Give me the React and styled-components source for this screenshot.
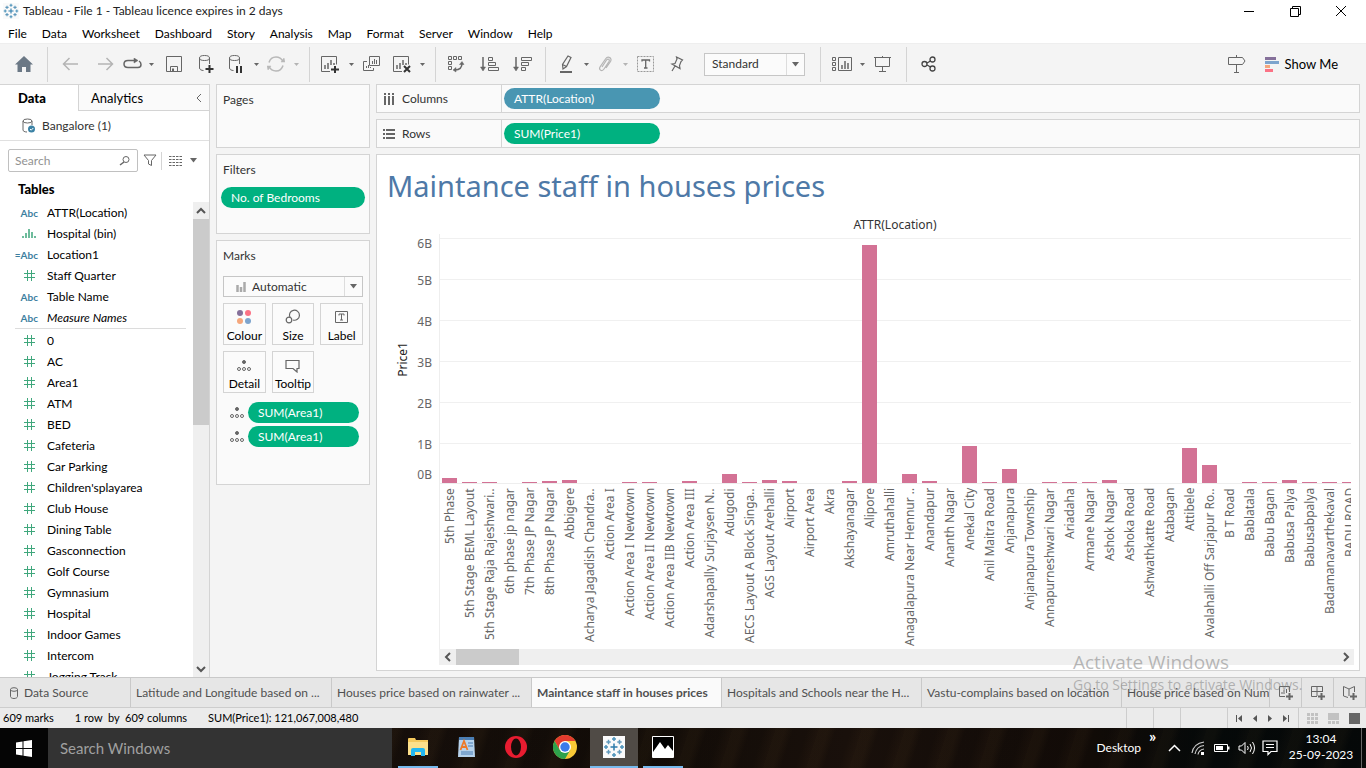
import React from 'react';
import styled, { createGlobalStyle, css } from 'styled-components';

const UI = '"Lato", "Open Sans", sans-serif';
const CHART = '"Noto Sans", "Open Sans", sans-serif';
const LINE = '#d4d4d4';
const GREEN = '#00b180';
const BLUE = '#4996b2';

const Global = createGlobalStyle`
  * { box-sizing: border-box; }
  html, body { margin: 0; padding: 0; }
  body { font-family: ${UI}; font-size: 12px; line-height: 16px; color: #000; background: #f4f4f4; overflow: hidden; }
  button, input, select { font: inherit; color: inherit; margin: 0; }
  button { border: 0; background: none; padding: 0; text-align: left; }
  ul { list-style: none; margin: 0; padding: 0; }
  svg { display: block; flex: none; }
`;

const Window = styled.div`
  display: flex;
  flex-direction: column;
  height: 100vh;
  position: relative;
`;

/* ---------- title bar and menu ---------- */

const TitleBar = styled.header`
  display: flex;
  align-items: center;
  height: 23px;
  padding: 0 2px 1px 3px;
  background: #fff;
`;
const TitleText = styled.h1`
  flex: 1;
  margin: 0 0 0 4px;
  font-size: 12px;
  font-weight: 400;
  color: #222;
`;
const WindowButton = styled.button`
  display: flex;
  align-items: center;
  justify-content: center;
  width: 46px;
  height: 22px;
`;
const MenuBar = styled.nav`
  display: flex;
  align-items: flex-end;
  gap: 15px;
  height: 20px;
  padding: 0 8px 1px;
  background: #fff;
`;
const MenuItem = styled.button`
  flex: none;
`;

/* ---------- toolbar ---------- */

const ToolBar = styled.div`
  display: flex;
  align-items: center;
  height: 41px;
  background: #f4f4f4;
  border-top: 1px solid #eee;
`;
const ToolGroup = styled.div`
  display: flex;
  align-items: center;
  width: ${(p) => p.$w}px;
  height: 35px;
  padding-left: 4px;
  border-right: ${(p) => (p.$last ? 0 : 1)}px solid ${LINE};
`;
const Tool = styled.button`
  display: flex;
  align-items: center;
  justify-content: center;
  flex: none;
  width: ${(p) => p.$w}px;
  height: 28px;
`;
const Spacer = styled.div`
  flex: 1;
`;
const ShowMe = styled.button`
  display: flex;
  align-items: center;
  gap: 6px;
  margin: 0 28px 0 18px;
  font-size: 13px;
`;
const SelectBox = styled.div`
  display: grid;
  grid-template-columns: 1fr 18px;
  align-items: center;
  width: ${(p) => p.$w};
  height: ${(p) => p.$h}px;
  margin: ${(p) => p.$m};
  background: #fbfbfb;
  border: 1px solid #c6c6c6;
  color: #333;
  & > * { grid-row: 1; }
  select {
    grid-column: 1 / 3;
    width: 100%;
    height: 100%;
    padding: 0 0 0 ${(p) => p.$pad}px;
    border: 0;
    background: none;
    appearance: none;
  }
`;
const SelectArrow = styled.span`
  grid-column: 2;
  display: flex;
  align-items: center;
  justify-content: center;
  height: 100%;
  border-left: 1px solid #ddd;
  pointer-events: none;
`;
const SelectIcon = styled.span`
  grid-column: 1;
  padding-left: 12px;
  pointer-events: none;
`;

/* ---------- body ---------- */

const Body = styled.main`
  display: flex;
  flex: 1;
  min-height: 0;
`;
const Side = styled.aside`
  display: flex;
  flex-direction: column;
  width: 210px;
  background: #fff;
  border-right: 1px solid ${LINE};
  border-top: 1px solid ${LINE};
`;
const SideTabs = styled.div`
  display: flex;
  height: 26px;
`;
const SideTab = styled.button`
  display: flex;
  align-items: center;
  justify-content: space-between;
  font-size: 13px;
  ${(p) => p.$active
    ? css`width: 78px; padding-left: 18px; font-weight: 900;`
    : css`flex: 1; padding: 0 6px 0 12px; background: #fafafa; border-left: 1px solid ${LINE}; border-bottom: 1px solid ${LINE};`}
`;
const Source = styled.div`
  display: flex;
  align-items: center;
  gap: 6px;
  height: 30px;
  padding-left: 22px;
  color: #333;
  border-bottom: 1px solid #e0e0e0;
`;
const SearchRow = styled.div`
  display: flex;
  align-items: center;
  padding: 8px 8px 0;
`;
const SearchBox = styled.label`
  display: flex;
  align-items: center;
  width: 130px;
  height: 23px;
  padding: 0 6px;
  border: 1px solid #c0c0c0;
  border-radius: 2px;
  input { flex: 1; min-width: 0; border: 0; padding: 0; outline: 0; background: none; }
  input::placeholder { color: #929292; opacity: 1; }
`;
const IconButton = styled.button`
  display: flex;
  align-items: center;
  justify-content: center;
  width: ${(p) => p.$w}px;
  height: 18px;
  border-left: ${(p) => (p.$ruled ? `1px solid ${LINE}` : 0)};
`;
const Heading = styled.h2`
  margin: 8px 0 4px 18px;
  font-size: 13px;
  line-height: 18px;
  font-weight: 900;
`;
const ListArea = styled.div`
  display: flex;
  flex: 1;
  min-height: 0;
`;
const Fields = styled.ul`
  flex: 1;
  overflow: hidden;
`;
const Field = styled.li`
  display: flex;
  align-items: center;
  height: 21px;
  font-style: ${(p) => (p.$italic ? 'italic' : 'normal')};
`;
const FieldRule = styled.li`
  height: 2px;
  margin-left: 15px;
  margin-right: 7px;
  border-top: 1px solid #dcdcdc;
`;
const FieldType = styled.span`
  display: flex;
  align-items: center;
  justify-content: ${(p) => (p.$text ? 'flex-end' : 'center')};
  width: ${(p) => (p.$text ? 38 : 58)}px;
  margin-right: ${(p) => (p.$text ? 9 : -11)}px;
  font-size: 10px;
  font-style: normal;
  font-weight: 700;
  color: #3d7f9f;
`;
const Scroll = styled.div`
  display: flex;
  flex-direction: ${(p) => (p.$h ? 'row' : 'column')};
  justify-content: space-between;
  align-items: center;
  flex: none;
  width: ${(p) => (p.$h ? 'auto' : '16px')};
  height: ${(p) => (p.$h ? '16px' : 'auto')};
  background: #efefef;
`;
const ScrollArrow = styled.button`
  display: flex;
  align-items: center;
  justify-content: center;
  width: 17px;
  height: 17px;
`;
const ScrollThumb = styled.div`
  ${(p) => (p.$h ? 'width: 63px; height: 16px;' : 'width: 16px; height: 206px;')}
  background: #cbcbcb;
`;

const Shelves = styled.section`
  display: flex;
  flex-direction: column;
  gap: 6px;
  width: 154px;
  margin-left: 6px;
`;
const Card = styled.div`
  display: flex;
  flex-direction: column;
  height: ${(p) => p.$h}px;
  padding: 7px 6px 0;
  background: #fafafa;
  border: 1px solid ${LINE};
  color: #333;
`;
const CardTitle = styled.h3`
  margin: 0;
  font-size: 12px;
  font-weight: 400;
`;
const Pill = styled.button`
  height: 21px;
  padding: 0 10px;
  border-radius: 11px;
  color: #fff;
  background: ${(p) => p.$color || GREEN};
  width: ${(p) => p.$w}px;
  margin: ${(p) => p.$m || 0};
`;
const MarkGrid = styled.div`
  display: grid;
  grid-template-columns: repeat(3, 1fr);
  gap: 6px;
  margin-bottom: 9px;
`;
const MarkButton = styled.button`
  display: flex;
  flex-direction: column;
  align-items: center;
  justify-content: space-between;
  height: 42px;
  padding: 5px 0 0;
  background: #fbfbfb;
  border: 1px solid ${LINE};
  color: #000;
`;
const PillRow = styled.div`
  display: flex;
  align-items: center;
  gap: 4px;
  padding-left: 7px;
  margin-bottom: 3px;
`;

const Sheet = styled.section`
  display: flex;
  flex: 1;
  flex-direction: column;
  gap: 6px;
  min-width: 0;
  margin: 0 6px 6px;
`;
const Shelf = styled.div`
  display: flex;
  height: 29px;
  background: #fafafa;
  border: 1px solid ${LINE};
`;
const ShelfLabel = styled.div`
  display: flex;
  align-items: center;
  gap: 7px;
  width: 125px;
  padding-left: 6px;
  color: #333;
  border-right: 1px solid ${LINE};
`;
const View = styled.div`
  display: flex;
  flex: 1;
  flex-direction: column;
  min-height: 0;
  padding: 0 5px 5px 0;
  background: #fff;
  border: 1px solid ${LINE};
  font-family: ${CHART};
`;
const ViewTitle = styled.h2`
  margin: 13px 0 11px 10px;
  font-size: 29px;
  line-height: 36px;
  font-weight: 400;
  color: #4e79a7;
`;
const FieldTitle = styled.div`
  margin: 0 3px 0 62px;
  height: 19px;
  line-height: 20px;
  text-align: center;
  color: #333;
`;
const Chart = styled.div`
  display: grid;
  flex: 1;
  min-height: 0;
  grid-template-columns: 34px 28px minmax(0, 1fr);
  grid-template-rows: 250px minmax(0, 1fr);
  margin-right: 3px;
`;
const AxisTitle = styled.div`
  justify-self: end;
  align-self: center;
  writing-mode: vertical-rl;
  transform: rotate(180deg);
  color: #222;
`;
const AxisLabels = styled.ul`
  padding-right: 7px;
  text-align: right;
  color: #666;
  li { height: 41px; line-height: 41px; }
  li:first-child { height: 26px; line-height: 20px; }
  li:last-child { height: 19px; line-height: 20px; }
`;
const Plot = styled.div`
  display: grid;
  grid-column: 3;
  overflow: hidden;
  border-left: 1px solid #eee;
  & > * { grid-area: 1 / 1; }
`;
const GridLines = styled.div`
  padding-top: 4px;
  div { height: 41px; border-top: 1px solid #f0f0f0; }
`;
const Bars = styled.div`
  display: flex;
  align-items: flex-end;
  border-bottom: 1px solid #eee;
`;
const Bar = styled.div`
  flex: none;
  width: 15px;
  margin: 0 3px 0 2px;
  background: #d37295;
`;
const Ticks = styled.ul`
  display: flex;
  grid-column: 3;
  overflow: hidden;
  border-left: 1px solid #eee;
`;
const Tick = styled.li`
  flex: none;
  display: flex;
  justify-content: center;
  width: 20px;
  color: #666;
  span {
    height: 100%;
    padding-bottom: 4px;
    line-height: 18px;
    text-align: right;
    white-space: nowrap;
    writing-mode: vertical-rl;
    transform: rotate(180deg);
  }
`;
const ChartScroll = styled.div`
  margin-left: 62px;
`;

/* ---------- bottom strips ---------- */

const SheetTabs = styled.div`
  display: flex;
  height: 31px;
  background: #e6e6e6;
  border-top: 1px solid #c9c9c9;
  border-bottom: 1px solid #cdcdcd;
`;
const SheetTab = styled.button`
  display: flex;
  align-items: center;
  gap: 6px;
  flex: ${(p) => (p.$grow ? 1 : 'none')};
  width: ${(p) => p.$w}px;
  padding-left: ${(p) => p.$pad || 5}px;
  overflow: hidden;
  white-space: nowrap;
  color: #505050;
  border-right: 1px solid #c9c9c9;
  ${(p) => p.$active && css`background: #fafafa; font-weight: 700;`}
`;
const NewTab = styled(SheetTab)`
  width: 32px;
  padding: 0;
  justify-content: center;
`;
const StatusBar = styled.footer`
  display: flex;
  height: 20px;
  align-items: center;
  padding-left: 3px;
  font-size: 11px;
  background: #ebebeb;
`;
const StatusText = styled.span`
  margin-right: 21px;
  white-space: pre;
`;
const StatusCell = styled.div`
  display: flex;
  align-items: center;
  justify-content: ${(p) => (p.$end ? 'flex-end' : 'space-evenly')};
  gap: ${(p) => (p.$end ? 10 : 0)}px;
  padding-right: ${(p) => (p.$end ? 6 : 0)}px;
  align-self: stretch;
  width: ${(p) => p.$w}px;
  border-left: 1px solid #cdcdcd;
`;

const TaskBar = styled.footer`
  display: flex;
  height: 40px;
  color: #fff;
  background:
    repeating-linear-gradient(108deg, rgba(80, 60, 30, 0.1) 0 9px, rgba(0, 0, 0, 0.12) 17px 30px, rgba(70, 48, 26, 0.08) 41px),
    linear-gradient(90deg, #0a0806, #18100b 30%, #130d08 46%, #1c120c 62%, #130c08 80%, #060a0a 88%, #060909);
`;
const Start = styled.button`
  display: flex;
  align-items: center;
  justify-content: center;
  width: 48px;
  background: #050505;
`;
const TaskSearch = styled.input`
  width: 344px;
  padding: 0 12px;
  border: 0;
  outline: 0;
  background: #333;
  && { font-size: 15px; }
  &::placeholder { color: #a0a0a0; opacity: 1; }
`;
const TaskApps = styled.div`
  display: flex;
  gap: 1px;
  padding-left: 2px;
`;
const TaskApp = styled.button`
  display: grid;
  grid-template-rows: 38px 2px;
  place-items: center;
  width: 48px;
  background: ${(p) => (p.$active ? '#504b46' : 'none')};
  &::after {
    content: '';
    width: ${(p) => (p.$active ? 48 : 40)}px;
    height: 2px;
    background: ${(p) => (p.$open ? '#76b9ed' : 'none')};
  }
`;
const Tray = styled.div`
  display: flex;
  align-items: center;
  margin-left: auto;
`;
const TrayItem = styled.button`
  display: flex;
  align-items: center;
  justify-content: center;
  width: 24px;
  height: 40px;
`;
const More = styled.span`
  align-self: flex-start;
  width: 9px;
  margin: 0 4px 0 8px;
  font-size: 16px;
  font-weight: 700;
`;
const Clock = styled.div`
  width: 76px;
  margin: 0 2px 0 1px;
  padding-bottom: 3px;
  text-align: center;
`;
const ShowDesktop = styled.button`
  align-self: stretch;
  width: 5px;
  border-left: 1px solid #666;
`;
const Watermark = styled.div`
  position: absolute;
  right: 57px;
  bottom: 72px;
  width: 236px;
  color: rgba(120, 120, 120, 0.5);
  font-family: "Open Sans", sans-serif;
  font-size: 14px;
  line-height: 22px;
  white-space: nowrap;
  pointer-events: none;
  strong { display: block; font-size: 19px; line-height: 24px; font-weight: 400; }
`;

/* ---------- icons ---------- */

const Svg = ({ w = 18, h = 18, c = '#666', sw = 1, children }) => (
  <svg width={w} height={h} viewBox={`0 0 ${w} ${h}`} fill="none" stroke={c} strokeWidth={sw} aria-hidden="true">
    {children}
  </svg>
);
const Caret = ({ c = '#666', big }) => big
  ? <svg width="7" height="5" fill={c}><path d="M0 0h7L3.500 4.500z" /></svg>
  : <svg width="5" height="3" fill={c}><path d="M0 0h5L2.500 3z" /></svg>;
const Chevron = ({ d, c = '#555' }) => {
  const p = { up: 'M1 7l4-4 4 4', down: 'M1 3l4 4 4-4', left: 'M7 1L3 5l4 4', right: 'M3 1l4 4-4 4' }[d];
  return <Svg w={10} h={10} c={c} sw={2}><path d={p} /></Svg>;
};
const Star = ({ x, y, r, c }) => <path d={`M${x - r} ${y}h${2 * r}M${x} ${y - r}v${2 * r}`} stroke={c} />;
const Logo = ({ s = 16 }) => (
  <svg width={s} height={s} viewBox="0 0 22 22" fill="none" strokeWidth="1.5">
    <rect width="22" height="22" fill="#fafafa" />
    <Star x={11} y={11} r={3.5} c="#2d7bab" />
    <Star x={11} y={3} r={2} c="#4d93ba" /><Star x={11} y={19} r={2} c="#4d93ba" />
    <Star x={3} y={11} r={2} c="#4d93ba" /><Star x={19} y={11} r={2} c="#4d93ba" />
    <Star x={5.5} y={6} r={2.2} c="#5f98bb" /><Star x={16.5} y={6} r={2.2} c="#5f98bb" />
    <Star x={5.5} y={16} r={2.2} c="#5f98bb" /><Star x={16.5} y={16} r={2.2} c="#5f98bb" />
  </svg>
);
const Cylinder = ({ plus, pause }) => (
  <Svg w={16} h={20}>
    <ellipse cx="6.500" cy="4" rx="5" ry="2.500" />
    <path d="M1.500 4v10c0 1.500 2 2.500 4 2.500M11.500 4v6" />
    {plus && <path d="M11.500 11v8M7.500 15h8" stroke="#333" strokeWidth="2" />}
    {pause && <path d="M9 12v7M13 12v7" stroke="#333" strokeWidth="2" />}
  </Svg>
);
const SheetIcon = ({ plus, cross }) => (
  <Svg w={20} h={18}>
    <path d="M10 16.500H1.500v-15h15v8" />
    <path d="M5 10v4M8 8v6M11 5v5M14 8v2" strokeWidth="1.500" />
    {plus && <path d="M15 11v7M11 14.500h8" stroke="#333" strokeWidth="2" />}
    {cross && <path d="M12 11l6 6M18 11l-6 6" stroke="#333" strokeWidth="2" />}
  </Svg>
);
const Dots = () => (
  <Svg w={14} h={12}>
    <circle cx="7" cy="2" r="1.500" fill="#666" />
    <circle cx="2" cy="9" r="1.500" /><circle cx="7" cy="9" r="1.500" /><circle cx="12" cy="9" r="1.500" />
  </Svg>
);
const Hash = () => (
  <Svg w={11} h={11} c="#3fa77c"><path d="M3.500 0v11M7.500 0v11M0 3.500h11M0 7.500h11" /></Svg>
);
const BinIcon = () => (
  <Svg w={14} h={9} c="#3fa77c"><path d="M1 7v2M4 4v5M7 0v9M10 3v6M13 7v2" strokeWidth="1.500" /></Svg>
);

/* ---------- data ---------- */

const MENUS = ['File', 'Data', 'Worksheet', 'Dashboard', 'Story', 'Analysis', 'Map', 'Format', 'Server', 'Window', 'Help'];
const DIMENSIONS = [
  ['Abc', 'ATTR(Location)'], ['bin', 'Hospital (bin)'], ['=Abc', 'Location1'],
  ['#', 'Staff Quarter'], ['Abc', 'Table Name'], ['Abc', 'Measure Names', true],
];
const MEASURES = [
  '0', 'AC', 'Area1', 'ATM', 'BED', 'Cafeteria', 'Car Parking', "Children'splayarea", 'Club House', 'Dining Table',
  'Gasconnection', 'Golf Course', 'Gymnasium', 'Hospital', 'Indoor Games', 'Intercom', 'Jogging Track',
];
const BARS = [
  ['5th Phase', 5], ['5th Stage BEML Layout', 1], ['5th Stage Raja Rajeshwari..', 1], ['6th phase jp nagar', 0],
  ['7th Phase JP Nagar', 1], ['8th Phase JP Nagar', 2], ['Abbigere', 3], ['Acharya Jagadish Chandra..', 0],
  ['Action Area I', 0], ['Action Area I Newtown', 1], ['Action Area II Newtown', 1], ['Action Area IIB Newtown', 0],
  ['Action Area III', 2], ['Adarshapally Surjaysen N..', 0], ['Adugodi', 9], ['AECS Layout A Block Singa..', 1],
  ['AGS Layout Arehalli', 3], ['Airport', 2], ['Airport Area', 0], ['Akra', 0], ['Akshayanagar', 2], ['Alipore', 238],
  ['Amruthahalli', 0], ['Anagalapura Near Hennur ..', 9], ['Anandapur', 2], ['Ananth Nagar', 0], ['Anekal City', 37],
  ['Anil Maitra Road', 1], ['Anjanapura', 14], ['Anjanapura Township', 0], ['Annapurneshwari Nagar', 1], ['Ariadaha', 1],
  ['Armane Nagar', 1], ['Ashok Nagar', 3], ['Ashoka Road', 0], ['Ashwathkatte Road', 0], ['Atabagan', 0],
  ['Attibele', 35], ['Avalahalli Off Sarjapur Ro..', 18], ['B T Road', 0], ['Bablatala', 1], ['Babu Bagan', 1],
  ['Babusa Palya', 3], ['Babusabpalya', 1], ['Badamanavarthekaval', 1], ['BADU ROAD', 1],
];

const TypeMark = ({ type }) => {
  if (type === '#') return <FieldType><Hash /></FieldType>;
  if (type === 'bin') return <FieldType><BinIcon /></FieldType>;
  return <FieldType $text>{type}</FieldType>;
};

const Toolbar = () => (
  <ToolBar>
    <ToolGroup $w={48}>
      <Tool $w={40} aria-label="Home">
        <Svg w={18} h={16} c="none"><path d="M9 0l9 8.500h-2.500V16H11v-5H7v5H2.500V8.500H0z" fill="#6b7885" /></Svg>
      </Tool>
    </ToolGroup>
    <ToolGroup $w={262}>
      <Tool $w={36} aria-label="Undo"><Svg w={16} h={14} c="#b4b4b4" sw={1.5}><path d="M16 7H1M7.500 1L1.500 7l6 6" /></Svg></Tool>
      <Tool $w={36} aria-label="Redo"><Svg w={16} h={14} c="#b4b4b4" sw={1.5}><path d="M0 7h15M8.500 1l6 6-6 6" /></Svg></Tool>
      <Tool $w={18} aria-label="Replay"><Svg w={20} h={12} sw={1.5}><path d="M13 2.500H5C2.500 2.500 1 4 1 6s1.500 3.500 4 3.500h10c2 0 3-1.500 3-3S17.500 4 16 3" /><path d="M11 0l4 2.500L11 5z" fill="#666" strokeWidth=".5" /></Svg></Tool>
      <Tool $w={18} aria-label="Replay options"><Caret /></Tool>
      <Tool $w={28} aria-label="Save"><Svg w={16} h={16}><path d="M.5.500h15v15H.500z" /><path d="M4.500 15v-4.500h7V15" /><path d="M7 12.500v3" strokeWidth="2" /></Svg></Tool>
      <Tool $w={36} aria-label="New data source"><Cylinder plus /></Tool>
      <Tool $w={24} aria-label="Pause auto updates"><Cylinder pause /></Tool>
      <Tool $w={16} aria-label="Update options"><Caret /></Tool>
      <Tool $w={24} aria-label="Run update">
        <Svg w={18} h={16} c="#b8b8b8" sw={1.5}><path d="M2 6.500C3 3 6 1 9 1s5.500 1.500 7 4.500M16 9.500C15 13 12 15 9 15s-5.500-1.500-7-4.500" /><path d="M14 6h4l-1-4zM4 10H0l1 4z" fill="#b8b8b8" strokeWidth=".5" /></Svg>
      </Tool>
      <Tool $w={16} aria-label="Run options"><Caret c="#b4b4b4" /></Tool>
    </ToolGroup>
    <ToolGroup $w={126}>
      <Tool $w={32} aria-label="New worksheet"><SheetIcon plus /></Tool>
      <Tool $w={10} aria-label="New options"><Caret /></Tool>
      <Tool $w={32} aria-label="Duplicate">
        <Svg w={18} h={16}><path d="M6.500.500h10v9h-10zM4 5.500H.500v9h10V12" /><path d="M9.500 5v3M11.500 3v5M13.500 4v4M3.500 10v2M5.500 9v3M7.500 11v1" /></Svg>
      </Tool>
      <Tool $w={28} aria-label="Clear sheet"><SheetIcon cross /></Tool>
      <Tool $w={12} aria-label="Clear options"><Caret /></Tool>
    </ToolGroup>
    <ToolGroup $w={110}>
      <Tool $w={32} aria-label="Swap rows and columns">
        <Svg w={18} h={18}><path d="M1.500 1.500h3v3h-3zM6.500 1.500h3v3h-3zM11.500 1.500h3v3h-3zM1.500 6.500h3v3h-3zM1.500 11.500h3v3h-3z" /><path d="M8 15c5 0 7-3 7-7" strokeWidth="1.500" /><path d="M9 12.500V17L6 15zM12.500 9.500H17L15 6.500z" fill="#666" strokeWidth=".5" /></Svg>
      </Tool>
      <Tool $w={34} aria-label="Sort ascending">
        <Svg w={19} h={16}><path d="M3 1v12" strokeWidth="1.500" /><path d="M.5 11h5L3 15z" fill="#666" strokeWidth=".5" /><path d="M8.500 1.500h4v3h-4zM8.500 6.500h7v3h-7zM8.500 11.500h10v3h-10z" /></Svg>
      </Tool>
      <Tool $w={32} aria-label="Sort descending">
        <Svg w={19} h={16}><path d="M3 1v12" strokeWidth="1.500" /><path d="M.5 11h5L3 15z" fill="#666" strokeWidth=".5" /><path d="M8.500 1.500h10v3h-10zM8.500 6.500h7v3h-7zM8.500 11.500h4v3h-4z" /></Svg>
      </Tool>
    </ToolGroup>
    <ToolGroup $w={275}>
      <Tool $w={32} aria-label="Highlight">
        <Svg w={14} h={18} sw={1.2}><path d="M9 1l3 1.500-4.500 9L4 14l-.5-4.500zM3.500 9.500l4 2" /><path d="M1 17h12" strokeWidth="2" /></Svg>
      </Tool>
      <Tool $w={8} aria-label="Highlight options"><Caret /></Tool>
      <Tool $w={30} aria-label="Group members">
        <Svg w={14} h={16} c="#b4b4b4" sw={1.2}><path d="M4 11l4.500-7c1.500-2 3.500-.5 2.500 1.500L6 13c-2 3-5.500 1-4-2l5.500-8c2.500-3.500 7-1 5 2.500L8 12" /></Svg>
      </Tool>
      <Tool $w={10} aria-label="Group options"><Caret c="#b4b4b4" /></Tool>
      <Tool $w={32} aria-label="Show mark labels">
        <Svg w={18} h={16}><path d="M.5.500h16v15H.500z" strokeDasharray="2 1" stroke="#999" /><path d="M5 5.500V4h7.500v1.500M8.700 4v8M7 12h3.500" strokeWidth="1.300" /></Svg>
      </Tool>
      <Tool $w={30} aria-label="Fix axes">
        <Svg w={14} h={16} sw={1.2}><path d="M6.500 1l6 3-1.500 1.500-1.500 4 .5 3-8-4.500 3-.5 2-4.500zM5 10l-3 5" /></Svg>
      </Tool>
      <SelectBox $w="101px" $h={23} $pad={7} $m="0 0 0 12px">
        <select aria-label="Fit" defaultValue="Standard"><option>Standard</option></select>
        <SelectArrow><Caret big /></SelectArrow>
      </SelectBox>
    </ToolGroup>
    <ToolGroup $w={86}>
      <Tool $w={34} aria-label="Show cards">
        <Svg w={20} h={14}><path d="M.5.500h3v3h-3zM.5 5.500h3v3h-3zM.5 10.500h3v3h-3zM6.500.500h13v13h-13z" /><path d="M10 8v4M13 4v8M16 6v6" strokeWidth="1.500" /></Svg>
      </Tool>
      <Tool $w={6} aria-label="Card options"><Caret /></Tool>
      <Tool $w={36} aria-label="Presentation mode">
        <Svg w={18} h={16}><path d="M0 1.500h17M1.500 2v8.500h14V2M8.500 0v1M8.500 11v4M5 15.500h7" /></Svg>
      </Tool>
    </ToolGroup>
    <ToolGroup $w={40} $last>
      <Tool $w={36} aria-label="Share">
        <Svg w={16} h={16} c="#444" sw={1.3}><circle cx="3.500" cy="8" r="2.500" /><circle cx="11.500" cy="3.500" r="2.500" /><circle cx="11.500" cy="12.500" r="2.500" /><path d="M6 7l3.500-2M6 9l3.500 2" /></Svg>
      </Tool>
    </ToolGroup>
    <Spacer />
    <Tool $w={20} aria-label="Data guide">
      <Svg w={19} h={18}><path d="M1.500 2.500h14L18 6l-2.500 3.500h-14zM9.500 0v2M9.500 10v7M7 17.500h5" /></Svg>
    </Tool>
    <ShowMe>
      <svg width="14" height="15"><path d="M0 0h11v3H0z" fill="#85709a" /><path d="M0 4h14v3H0z" fill="#7da4cd" /><path d="M0 8h5v3H0z" fill="#f5a77c" /><path d="M0 12h8v3H0z" fill="#fb7285" /></svg>
      Show Me
    </ShowMe>
  </ToolBar>
);

const DataPane = () => (
  <Side>
    <SideTabs>
      <SideTab $active>Data</SideTab>
      <SideTab>Analytics<Svg w={8} h={10}><path d="M6 1L2 5l4 4" /></Svg></SideTab>
    </SideTabs>
    <Source>
      <Svg w={14} h={16}><ellipse cx="5.500" cy="3" rx="4.500" ry="2" /><path d="M1 3v9c0 1 1.500 2 4 2M10 3v4" /><circle cx="9.500" cy="11" r="3.500" fill="#3b82a5" stroke="none" /><path d="M8 11l1.200 1.200L11.300 10" stroke="#fff" /></Svg>
      Bangalore (1)
    </Source>
    <SearchRow>
      <SearchBox>
        <input placeholder="Search" aria-label="Search" />
        <Svg w={12} h={11}><circle cx="7" cy="4.500" r="3" /><path d="M5 7l-4 3" strokeWidth="1.500" /></Svg>
      </SearchBox>
      <IconButton $w={23} aria-label="Filter"><Svg w={14} h={13}><path d="M1 1h12L8.500 6.500v5l-3-1.500V6.500z" /></Svg></IconButton>
      <IconButton $w={27} $ruled aria-label="View as list">
        <Svg w={13} h={11}><path d="M0 1.500h13M0 4.500h13M0 7.500h13M0 10.500h13" strokeDasharray="2.500 1" /></Svg>
      </IconButton>
      <IconButton $w={10} aria-label="List options"><Caret big /></IconButton>
    </SearchRow>
    <Heading>Tables</Heading>
    <ListArea>
      <Fields>
        {DIMENSIONS.map(([type, name, italic]) => (
          <Field key={name} $italic={italic}><TypeMark type={type} />{name}</Field>
        ))}
        <FieldRule />
        {MEASURES.map((name) => (
          <Field key={name}><TypeMark type="#" />{name}</Field>
        ))}
      </Fields>
      <Scroll>
        <ScrollArrow aria-label="Scroll up"><Chevron d="up" /></ScrollArrow>
        <ScrollThumb />
        <Spacer />
        <ScrollArrow aria-label="Scroll down"><Chevron d="down" /></ScrollArrow>
      </Scroll>
    </ListArea>
  </Side>
);

const MarksCard = () => (
  <Card $h={245}>
    <CardTitle>Marks</CardTitle>
    <SelectBox $w="100%" $h={21} $pad={28} $m="12px 0 6px">
      <SelectIcon>
        <Svg w={10} h={10} c="#aaa"><path d="M1.500 3v7M5 5v5M8.500 0v10" strokeWidth="2.500" /></Svg>
      </SelectIcon>
      <select aria-label="Mark type" defaultValue="Automatic"><option>Automatic</option></select>
      <SelectArrow><Caret big /></SelectArrow>
    </SelectBox>
    <MarkGrid>
      <MarkButton>
        <svg width="16" height="16"><circle cx="4" cy="4" r="3" fill="#85709a" /><circle cx="12" cy="4" r="3" fill="#fb7285" /><circle cx="4" cy="12" r="3" fill="#f5a77c" /><circle cx="12" cy="12" r="3" fill="#7da4cd" /></svg>
        Colour
      </MarkButton>
      <MarkButton>
        <Svg w={16} h={16} sw={1.2}><path d="M5 8.500A5 5 0 1 1 8 11" /><circle cx="4" cy="11" r="2.800" /></Svg>
        Size
      </MarkButton>
      <MarkButton>
        <Svg w={14} h={16}><path d="M.5 2.500h12v11H.500z" /><path d="M4 6.500V5h5v1.500M6.500 5v6M5 11h3" /></Svg>
        Label
      </MarkButton>
      <MarkButton>
        <Svg w={14} h={16}><circle cx="7" cy="5" r="1.500" fill="#666" /><circle cx="2" cy="12" r="1.500" /><circle cx="7" cy="12" r="1.500" /><circle cx="12" cy="12" r="1.500" /></Svg>
        Detail
      </MarkButton>
      <MarkButton>
        <Svg w={15} h={16} sw={1.2}><path d="M1 3.500h13v8h-2V15l-4-3.500H1z" /></Svg>
        Tooltip
      </MarkButton>
    </MarkGrid>
    <PillRow><Dots /><Pill $w={111}>SUM(Area1)</Pill></PillRow>
    <PillRow><Dots /><Pill $w={111}>SUM(Area1)</Pill></PillRow>
  </Card>
);

const Worksheet = () => (
  <Sheet>
    <Shelf>
      <ShelfLabel>
        <Svg w={12} h={12} c="none"><path d="M1 0h2v2H1zM5 0h2v2H5zM9 0h2v2H9zM1 3h2v9H1zM5 3h2v9H5zM9 3h2v9H9z" fill="#666" /></Svg>
        Columns
      </ShelfLabel>
      <Pill $w={156} $color={BLUE} $m="3px 2px">ATTR(Location)</Pill>
    </Shelf>
    <Shelf>
      <ShelfLabel>
        <Svg w={12} h={10} c="none"><path d="M0 0h2v2H0zM0 4h2v2H0zM0 8h2v2H0zM3 0h9v2H3zM3 4h9v2H3zM3 8h9v2H3z" fill="#666" /></Svg>
        Rows
      </ShelfLabel>
      <Pill $w={156} $m="3px 2px">SUM(Price1)</Pill>
    </Shelf>
    <View>
      <ViewTitle>Maintance staff in houses prices</ViewTitle>
      <FieldTitle>ATTR(Location)</FieldTitle>
      <Chart>
        <AxisTitle>Price1</AxisTitle>
        <AxisLabels>{[6, 5, 4, 3, 2, 1, 0].map((n) => <li key={n}>{n}B</li>)}</AxisLabels>
        <Plot>
          <GridLines>{[6, 5, 4, 3, 2, 1].map((n) => <div key={n} />)}</GridLines>
          <Bars>{BARS.map(([name, h]) => <Bar key={name} style={{ height: h }} />)}</Bars>
        </Plot>
        <Ticks>{BARS.map(([name]) => <Tick key={name}><span>{name}</span></Tick>)}</Ticks>
      </Chart>
      <ChartScroll>
        <Scroll $h>
          <ScrollArrow aria-label="Scroll left"><Chevron d="left" /></ScrollArrow>
          <ScrollThumb $h />
          <Spacer />
          <ScrollArrow aria-label="Scroll right"><Chevron d="right" /></ScrollArrow>
        </Scroll>
      </ChartScroll>
    </View>
  </Sheet>
);

const BottomTabs = () => (
  <SheetTabs>
    <SheetTab $w={131} $pad={10}>
      <Svg w={8} h={12}><ellipse cx="4" cy="2.500" rx="3.500" ry="1.800" /><path d="M.5 2.500v7c0 1 1.500 2 3.500 2s3.500-1 3.500-2v-7" /></Svg>
      Data Source
    </SheetTab>
    <SheetTab $w={201}>Latitude and Longitude based on ...</SheetTab>
    <SheetTab $w={200}>Houses price based on rainwater ...</SheetTab>
    <SheetTab $w={190} $active>Maintance staff in houses prices</SheetTab>
    <SheetTab $w={200}>Hospitals and Schools near the H...</SheetTab>
    <SheetTab $w={200}>Vastu-complains based on location</SheetTab>
    <SheetTab $w={100} $grow>House price based on Num</SheetTab>
    <NewTab aria-label="New worksheet"><Svg w={16} h={16}><path d="M7 11.500H1.500v-10h10V7" /><path d="M4 7v2M6 5v4M8.500 4v4" /><path d="M11.500 8v7M8 11.500h7" strokeWidth="2" /></Svg></NewTab>
    <NewTab aria-label="New dashboard"><Svg w={16} h={16}><path d="M7 11.500H1.500v-10h11V7M1 6.500h12M7 1v10" /><path d="M11.500 8v7M8 11.500h7" strokeWidth="2" /></Svg></NewTab>
    <NewTab aria-label="New story"><Svg w={16} h={16}><path d="M6 12.500L1.500 11V1.500L7 4l5.500-2.500V7M7 4v7" /><path d="M11.500 8v7M8 11.500h7" strokeWidth="2" /></Svg></NewTab>
  </SheetTabs>
);

const Status = () => (
  <StatusBar>
    <StatusText>609 marks</StatusText>
    <StatusText>1 row  by  609 columns</StatusText>
    <StatusText>SUM(Price1): 121,067,008,480</StatusText>
    <Spacer />
    <StatusCell $w={27} />
    <StatusCell $w={27} />
    <StatusCell $w={47} />
    <StatusCell $w={71}>
      <svg width="7" height="7" fill="#555"><path d="M0 0h1v7H0zM6 0v7L2 3.500z" /></svg>
      <svg width="7" height="7" fill="#555"><path d="M5 0v7L1 3.500z" /></svg>
      <svg width="7" height="7" fill="#555"><path d="M1 0v7l4-3.500z" /></svg>
      <svg width="7" height="7" fill="#555"><path d="M0 0v7l4-3.500zM5 0h1v7H5z" /></svg>
    </StatusCell>
    <StatusCell $w={68} $end>
      <svg width="11" height="11" fill="#c2c2c2"><path d="M0 0h3v3H0zM4 0h3v3H4zM8 0h3v3H8zM0 4h3v3H0zM4 4h3v3H4zM8 4h3v3H8zM0 8h3v3H0zM4 8h3v3H4zM8 8h3v3H8z" /></svg>
      <svg width="11" height="11" fill="#c2c2c2"><path d="M0 0h11v7H0zM0 8h3v3H0zM4 8h3v3H4zM8 8h3v3H8z" /></svg>
      <svg width="11" height="11" fill="#666"><path d="M0 0h11v11H0z" /></svg>
    </StatusCell>
  </StatusBar>
);

const APPS = [
  { name: 'File Explorer', open: true, icon: (
    <svg width="22" height="20"><path d="M1 2q0-1 1-1h6l1 2h12v15H1z" fill="#f5c95d" /><path d="M1 5h20v13H1z" fill="#fde08b" /><path d="M4 19v-6q0-2 2-2h10q2 0 2 2v6h-4v-4H8v4z" fill="#23b7f0" /></svg>
  ) },
  { name: 'WordPad', icon: (
    <svg width="20" height="22"><path d="M2 1h15l1 20H1z" fill="#b7d3ec" /><path d="M2 1h15v3H2z" fill="#4b7fb5" /><path d="M11 7h5M11 10h5M4 16h12M4 18h12" stroke="#4b7fb5" /><path d="M3.500 14L7 5l3.500 9M5 11h4" stroke="#ee7a28" strokeWidth="1.800" fill="none" /></svg>
  ) },
  { name: 'Opera', icon: (
    <svg width="24" height="24"><ellipse cx="12" cy="12" rx="11" ry="11" fill="#e81c30" /><ellipse cx="12" cy="12" rx="5" ry="8.500" fill="#160d0a" /></svg>
  ) },
  { name: 'Chrome', icon: (
    <svg width="24" height="24"><circle cx="12" cy="12" r="12" fill="#f9c936" /><path d="M1.600 6a12 12 0 0 1 20.800 0H12l-5.200 9z" fill="#e33b2e" /><path d="M1.600 6A12 12 0 0 0 12 24l5.200-9H6.800z" fill="#2da24c" /><circle cx="12" cy="12" r="6" fill="#fff" /><circle cx="12" cy="12" r="4.700" fill="#3a7bea" /></svg>
  ) },
  { name: 'Tableau', open: true, active: true, icon: <Logo s={22} /> },
  { name: 'Photos', open: true, icon: (
    <svg width="22" height="22"><path d="M.5.500h21v21H.500z" fill="#000" stroke="#fff" /><path d="M1 16l7-10 5 7 3-4 5 6v6H1z" fill="#fff" /></svg>
  ) },
];

const Taskbar = () => (
  <TaskBar>
    <Start aria-label="Start">
      <svg width="16" height="17" fill="#fff"><path d="M0 2.500L6.500 1.500V8H0zM7.500 1.300L16 0v8H7.500zM0 9h6.500v6.500L0 14.500zM7.500 9H16v8l-8.500-1.300z" /></svg>
    </Start>
    <TaskSearch placeholder="Search Windows" aria-label="Search Windows" />
    <TaskApps>
      {APPS.map((a) => (
        <TaskApp key={a.name} $open={a.open} $active={a.active} aria-label={a.name}>{a.icon}</TaskApp>
      ))}
    </TaskApps>
    <Tray>
      <span>Desktop</span>
      <More>»</More>
      <TrayItem aria-label="Hidden icons"><Svg w={13} h={8} c="#fff" sw={1.5}><path d="M1 7l5.500-5.500L12 7" /></Svg></TrayItem>
      <TrayItem aria-label="Network">
        <Svg w={14} h={14} c="#ccc" sw={1.2}><path d="M1 12C2 6 6 2 13 1M4 13c1-5 4-8 9-8.500M7 13.500c.5-3 3-5 6-5.500" /><path d="M10 11h3v3h-3z" fill="#fff" stroke="none" /></Svg>
      </TrayItem>
      <TrayItem aria-label="Battery">
        <Svg w={16} h={10} c="#fff"><path d="M.5 1.500h13v7H.500z" /><path d="M2 3h7v4H2zM14 3.500h1.500v3H14z" fill="#fff" stroke="none" /></Svg>
      </TrayItem>
      <TrayItem aria-label="Volume">
        <Svg w={17} h={14} c="#fff"><path d="M1 5h2.500L7 1.500v11L3.500 9H1zM9.500 5q1.500 2 0 4M12 3q3 4 0 8M14.500 1q4 6 0 12" /></Svg>
      </TrayItem>
      <TrayItem aria-label="Notifications">
        <Svg w={16} h={16} c="#fff" sw={1.2}><path d="M1 1h14v10.500H9L6 14.500v-3H1zM4 4.500h8M4 7.500h8" /></Svg>
      </TrayItem>
      <Clock>13:04<br />25-09-2023</Clock>
      <ShowDesktop aria-label="Show desktop" />
    </Tray>
  </TaskBar>
);

export default function App() {
  return (
    <Window>
      <Global />
      <TitleBar>
        <Logo />
        <TitleText>Tableau - File 1 - Tableau licence expires in 2 days</TitleText>
        <WindowButton aria-label="Minimise"><Svg w={10} h={10} c="#000"><path d="M0 5.500h10" /></Svg></WindowButton>
        <WindowButton aria-label="Restore"><Svg w={11} h={11} c="#000"><path d="M.5 2.500h8v8h-8zM2.500 2V.500h8v8H9" /></Svg></WindowButton>
        <WindowButton aria-label="Close"><Svg w={10} h={10} c="#000"><path d="M0 0l10 10M10 0L0 10" /></Svg></WindowButton>
      </TitleBar>
      <MenuBar>{MENUS.map((m) => <MenuItem key={m}>{m}</MenuItem>)}</MenuBar>
      <Toolbar />
      <Body>
        <DataPane />
        <Shelves>
          <Card $h={64}><CardTitle>Pages</CardTitle></Card>
          <Card $h={80}>
            <CardTitle>Filters</CardTitle>
            <Pill $w={144} $m="9px 0 0 -2px">No. of Bedrooms</Pill>
          </Card>
          <MarksCard />
        </Shelves>
        <Worksheet />
      </Body>
      <BottomTabs />
      <Status />
      <Taskbar />
      <Watermark><strong>Activate Windows</strong>Go to Settings to activate Windows.</Watermark>
    </Window>
  );
}
